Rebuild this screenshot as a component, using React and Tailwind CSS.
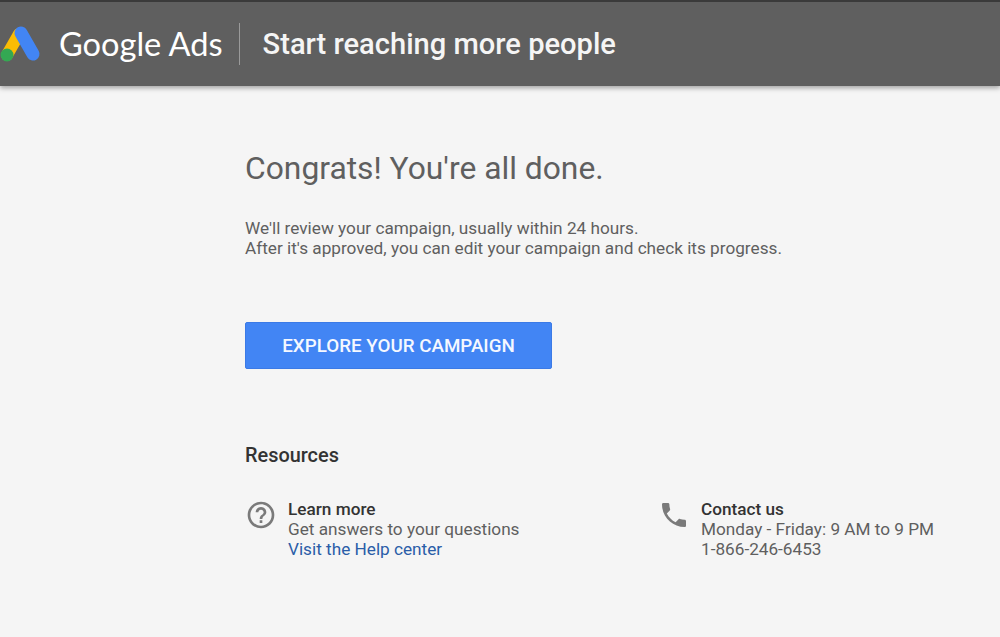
import React from 'react';
import { MdOutlineHelpOutline, MdPhone } from 'react-icons/md';

const Logo = () => (
    <svg width="42" height="40" viewBox="0 0 42 40" className="shrink-0">
        <line x1="19" y1="10" x2="7" y2="31" stroke="#fbbc04" strokeWidth="12" strokeLinecap="round" />
        <line x1="21" y1="9" x2="33" y2="30" stroke="#4285f4" strokeWidth="13" strokeLinecap="round" />
        <circle cx="7" cy="31" r="6.5" fill="#34a853" />
    </svg>
);

const App = () => {
    return (
        <div className="h-[637px] w-[1000px] overflow-hidden bg-[#f5f5f5] font-['Roboto',sans-serif]">
            <div className="flex h-[86px] items-center border-t-2 border-[#3a3a3a] bg-[#5f5f5f] shadow-[0_2px_5px_rgba(0,0,0,0.35)]">
                <Logo />
                <span className="ml-[17px] font-['Lato',sans-serif] text-[32.6px] text-white">Google Ads</span>
                <div className="ml-[16px] h-[42px] w-px bg-[#9a9a9a]" />
                <span className="mt-[2px] ml-[23px] text-[29.1px] font-medium text-[#f5f5f5]">Start reaching more people</span>
            </div>

            <div className="pl-[245px]">
                <h1 className="mt-[62px] text-[31.8px] leading-[40px] text-[#5f5f5f]">Congrats! You're all done.</h1>
                <p className="mt-[30px] text-[17.2px] leading-[20px] text-[#5f5f5f]">
                    We'll review your campaign, usually within 24 hours.
                    <br />
                    After it's approved, you can edit your campaign and check its progress.
                </p>

                <button className="mt-[64px] flex h-[47px] w-[307px] items-center justify-center rounded-[2px] border border-[#3b7ae6] bg-[#4285f4] pt-[2px] text-[18.8px] font-medium text-[#f5f8ff]">
                    EXPLORE YOUR CAMPAIGN
                </button>

                <h2 className="mt-[75px] text-[19.9px] leading-[24px] font-medium text-[#333333]">Resources</h2>

                <div className="mt-[31px] flex text-[17.2px] leading-[20px] text-[#5f5f5f]">
                    <div className="flex w-[416px]">
                        <MdOutlineHelpOutline className="shrink-0 text-[#7a7a7a]" size={32} />
                        <div className="ml-[11px]">
                            <div className="font-medium text-[#333333]">Learn more</div>
                            <div>Get answers to your questions</div>
                            <div className="text-[#2a5da8]">Visit the Help center</div>
                        </div>
                    </div>
                    <div className="flex">
                        <MdPhone className="ml-[-3px] shrink-0 text-[#7a7a7a]" size={32} />
                        <div className="ml-[11px]">
                            <div className="font-medium text-[#333333]">Contact us</div>
                            <div>Monday - Friday: 9 AM to 9 PM</div>
                            <div>1-866-246-6453</div>
                        </div>
                    </div>
                </div>
            </div>
        </div>
    );
};

export default App;
